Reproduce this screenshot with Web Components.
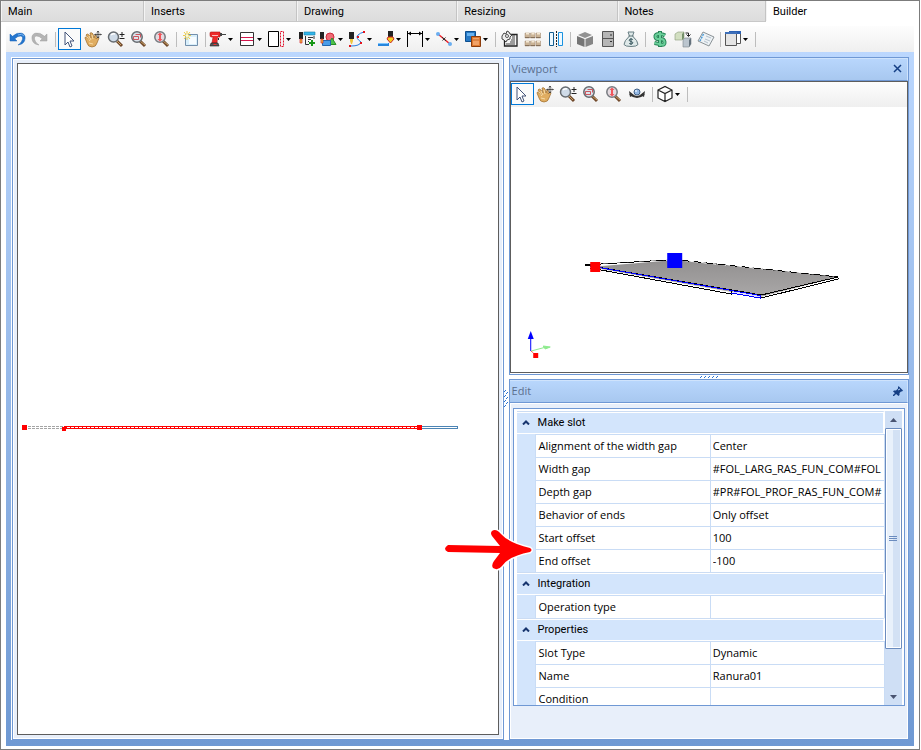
<!DOCTYPE html>
<html lang="en">
<head>
<meta charset="utf-8">
<title>Builder</title>
<style>
  body {
    margin: 0;
    background: #fff;
    color: #000;
    font: 11px/16px "Open Sans", "Noto Sans", sans-serif;
  }
</style>
</head>
<body>
<builder-app></builder-app>

<script>
const ICONS = {
  undo: `<path d="M0 3v7h7L4.800 7.800Q8 4.500 11 5Q14 6 11.500 10.500Q10.500 12.500 8 14Q13 13.500 14.500 10Q16.500 4 12 2.200Q7 1 2.500 5.300Z" fill="#2476cf" stroke="#1561b5" stroke-width=".5"/><path d="M8 4Q12 2 14 5" fill="none" stroke="#7db6ef"/>`,
  redo: `<path d="M14 3v7H7l2.200-2.200Q6 4.500 3 5Q0 6 2.500 10.500Q3.500 12.500 6 14Q1 13.500 -.5 10Q-2.500 4 2 2.200Q7 1 11.500 5.300Z" fill="#b4b4b4" stroke="#9d9d9d" stroke-width=".5"/>`,
  pointer: `<path d="M3 1v13l3-3 2 5 2-1-2-5h4Z" fill="#fff" stroke="#435378" stroke-width="1"/>`,
  hand: `<path d="M0 7Q0 5 2 7l2 2-3-5Q2 2 4 4l2 3-1-5Q7 1 8 3l1 4 1-3Q12 3 11 8q3-3 3-1l-2 5q-1 4-5 4-4 0-5-4Z" fill="#e0ad61" stroke="#9b6a2b" stroke-width=".7"/><path d="M2 6l3 4M4 5l2 4M7 4l1 4M4 12l4 1" stroke="#f7dca8" fill="none"/><path d="M13 0v7M9.500 3.500h7M12 1.500l1-1.500 1 1.500M12 5.500l1 1.500 1-1.500M11 2.500l-1 1 1 1M15 2.500l1 1-1 1" fill="none" stroke="#333" stroke-width=".8"/>`,
  zoomPlus: `<path d="M9 10l5 5" stroke="#70482a" stroke-width="3"/><path d="M9 10l4 4" stroke="#c8a468"/><circle cx="5.500" cy="6" r="5" fill="#cfdbe8" stroke="#666b70" stroke-width="1.500"/><path d="M3 4q2-2 4-1" fill="none" stroke="#fff" stroke-width="1.500"/><path d="M11.500 3.500h5M14 1v5M11.500 7.500h5" stroke="#222"/>`,
  zoomArea: `<path d="M9 10l5 5" stroke="#70482a" stroke-width="3"/><path d="M9 10l5 4" stroke="#c8a468"/><circle cx="6" cy="6" r="5.200" fill="#dce3eb" stroke="#666b70" stroke-width="1.500"/><path d="M2.500 5.500h5v3h-5zM4.500 3.500h5v3" fill="none" stroke="#c8333b" stroke-width=".8"/>`,
  zoomFit: `<path d="M9 10l5 5" stroke="#70482a" stroke-width="3"/><path d="M9 10l5 4" stroke="#c8a468"/><circle cx="6" cy="6" r="5.200" fill="#e4dbe1" stroke="#777b80" stroke-width="1.500"/><path d="M6 3v6" stroke="#f0565b" stroke-width="2"/><path d="M3.500 4L6 1.500 8.500 4ZM3.500 8L6 10.500 8.500 8Z" fill="#f0565b"/>`,
  fresh: `<path d="M2.500 3.500h12v11h-12z" fill="#d9effb" stroke="#7390ac"/><path d="M6 6h7v7H6z" fill="#f7fcff"/><path d="M4 0v9M0 4.500h8M1 1l6 7M7 1L1 8" stroke="#efcd46"/><circle cx="4" cy="4.500" r="1.500" fill="#fffbd0"/>`,
  drill: `<path d="M0 2q0-1 1-1h9v5H7.500L7 12H2l1-6H1Q0 6 0 4Z" fill="#ee2929" stroke="#a81515" stroke-width=".6"/><path d="M10 2h2v3h-2M12 3h4v1h-4" fill="#444"/><path d="M2 4.500h6" stroke="#fff" stroke-width=".7"/><path d="M1 12h7l1 3H0Z" fill="#555" stroke="#222" stroke-width=".6"/><path d="M3.500 13.500h3" stroke="#e33"/><path d="M8 7l1 1-1 1" stroke="#222" fill="none"/>`,
  shelves: `<path d="M1.500 1.500h13v13h-13z" fill="#fff" stroke="#333"/><path d="M2 6h12M2 9h12" stroke="#d5164c" shape-rendering="crispEdges"/>`,
  split: `<path d="M.5 .5h10v15H.5z" fill="#fff" stroke="#000"/><path d="M12.500 .5h3v15h-3z" fill="none" stroke="#e0122b" stroke-dasharray="2 1"/>`,
  cutAdd: `<path d="M0 1h4v7H0z" fill="#222"/><path d="M1 8h2v4H1z" fill="#eec53d" stroke="#d5252b" stroke-width=".7"/><path d="M5 1h11v3H5z" fill="#32b5ea" stroke="#167ca6" stroke-width=".6"/><path d="M6.500 5v8.500H10M15 5v3M9 6.500h5M9 8.500h3M9 10.500h1" fill="none" stroke="#333"/><path d="M13 9v6M10 12h6" stroke="#169616" stroke-width="2"/>`,
  shapes: `<circle cx="10" cy="6" r="4" fill="#ef6a75" stroke="#cf2b3b"/><path d="M8 13.500l4-6.500 4 6.500Z" fill="#4bc24b" stroke="#278d27"/><path d="M2.500 9.500h8v5h-8z" fill="#4a9de8" stroke="#2067b1"/><path d="M0 1h4v7H0z" fill="#222"/><path d="M1 8h2v4H1z" fill="#eec53d" stroke="#d5252b" stroke-width=".7"/>`,
  curve: `<path d="M2 15q9 0 10-4-6-4-3-7 2-2 6-3" fill="none" stroke="#247ee1"/><path d="M0 1h5v7H0z" fill="#222"/><path d="M1 8h3v2L3 13H2L1 10z" fill="#eec53d"/><path d="M0 14h2v2H0zM11 11h2v2h-2zM14 0h2v2h-2zM8 5h2v2H8z" fill="#e4131b"/>`,
  edge: `<path d="M0 12h11v3H0z" fill="#2685dd"/><path d="M0 12.500h10" stroke="#7cc5ff"/><path d="M10 0h5v6h-5z" fill="#222"/><path d="M10 6h5l1 2-3.500 4L9 8Z" fill="#f2cd20" stroke="#cd2420"/>`,
  dimension: `<path d="M.5 0v16M15.500 0v16M1 2.500h14" fill="none" stroke="#000"/><path d="M1 2.500l3-2v4ZM15 2.500l-3-2v4Z"/>`,
  line: `<path d="M2 3l12 10" stroke="#ef1f27" stroke-width="1.500"/><path d="M6 6l4 4M9.500 6.500l-3 3" stroke="#333"/><circle cx="2" cy="3" r="2" fill="#6aaef0"/><circle cx="14" cy="13" r="2" fill="#6aaef0"/>`,
  copy: `<path d="M.5 .5h10v10H.5z" fill="#2678c4" stroke="#0d4f8e"/><path d="M2 2h7v3H2z" fill="#68b2ef"/><path d="M6.500 5.500h9v10h-9z" fill="#df782c" stroke="#8b3c0c"/><path d="M8 7h6v7H8z" fill="#f1a267"/><path d="M8 9h6" stroke="#c56421"/>`,
  estimate: `<path d="M6 3.500h9v11.500H2.500V9" fill="#f4f4f4" stroke="#222" stroke-width="1.300"/><path d="M4 13h9M8 11h5M10 7h3M9 9h4M10 5h3" stroke="#444"/><path d="M0 5l2-3 2 1 1-3 2 1 1 2 2 1-2 2v2l-3 1-1 2-2-2-2-1Z" fill="#eee" stroke="#333" stroke-width=".9"/><circle cx="5" cy="5" r="1.500" fill="#fff" stroke="#555"/>`,
  people: `<g fill="#cbb496" stroke="#a18a70" stroke-width=".5"><path d="M0 2h4.500v5H0zM5.500 2H10v5H5.500zM11 2h4.500v5H11zM0 10h4.500v5H0zM5.500 10H10v5H5.500zM11 10h4.500v5H11z"/></g><path d="M1 2.500h3M6.500 2.500h3M12 2.500h3M1 10.500h3M6.500 10.500h3M12 10.500h3" stroke="#f3e8d5" stroke-width="2"/><path d="M0 6.500h4.500M5.500 6.500H10M11 6.500h4.500M0 14.500h4.500M5.500 14.500H10M11 14.500h4.500" stroke="#86705a"/>`,
  mirror: `<path d="M1.500 1.500h4v13h-4z" fill="#eef9ff" stroke="#155e91"/><path d="M10.500 1.500h4v13h-4z" fill="#eef9ff" stroke="#1992e0"/><path d="M8 0v16" fill="none" stroke="#222" stroke-dasharray="2 1" shape-rendering="crispEdges"/>`,
  box: `<path d="M1 4l7-3 7 3-7 3Z" fill="#929292"/><path d="M0 5l7.500 3v8L0 13Z" fill="#757575"/><path d="M16 5L8.500 8v8l7.500-3Z" fill="#858585"/>`,
  cabinet: `<path d="M2.500 .5h11v15h-11z" fill="#b6b6b6" stroke="#555"/><path d="M3 7.500h10" stroke="#555"/><path d="M10 4h2M10 10.500h2" stroke="#333"/>`,
  money: `<path d="M5 1h6L9.500 5q5.500 5 5.500 8.500-1 2-7 2t-7-2Q1 10 6.500 5Z" fill="#dfe9e9" stroke="#687e83"/><path d="M5.500 5h5" stroke="#60767a"/><path d="M9.800 8.500Q8 7.500 6.500 8.500t1.500 2 1.500 2q-1 1-3.300 0M8 7v7" stroke="#38565e" fill="none"/>`,
  dollar: `<path d="M13 4.500Q10 2.500 6.500 3T3.500 6t4.500 2 4.500 3-3.500 2.500-6.500-1.500M8 0v16" fill="none" stroke="#278557" stroke-width="4"/><path d="M13 4.500Q10 2.500 6.500 3T3.500 6t4.500 2 4.500 3-3.500 2.500-6.500-1.500M8 1v14" fill="none" stroke="#6acf9a" stroke-width="2"/>`,
  blocks: `<path d="M0 3l3-2h6v6l-2 2H0Z" fill="#d2dfc1" stroke="#8a9b78" stroke-width=".6"/><path d="M7 3l2-2v6L7 9Z" fill="#74906a"/><path d="M8 9l2-2h6v6l-2 3H8Z" fill="#bbc5ce" stroke="#78838c" stroke-width=".6"/><path d="M14 9l2-2v6l-2 3Z" fill="#64717c"/><path d="M10.500 2h3v3M11.500 3.500l2 2 2-2" stroke="#222" fill="none"/>`,
  notes: `<path d="M5 1l11 5-5 9-11-5Z" fill="#edf2f5" stroke="#8a9296"/><path d="M5.500 3L2 10" stroke="#4a9cd9" stroke-dasharray="2 1" stroke-width="1.500"/><path d="M8 5l5 2M7 8l5 2M6 10l4 2" stroke="#b4c1cc"/>`,
  windows: `<path d="M4.500 1.500h11v11h-11z" fill="#fff" stroke="#555"/><path d="M4 0h12v3H4z" fill="#2c62b5"/><path d="M.5 2.500h11v12H.5z" fill="#e4e4e4" stroke="#555"/><path d="M0 1h12v2H0z" fill="#3f70b9"/>`,
  orbit: `<circle cx="8" cy="6" r="3" fill="#94b8e4" stroke="#426287"/><path d="M1 8q7 6 14 0" fill="none" stroke="#333" stroke-width="2"/><path d="M0 5l1 6 4-2ZM16 5l-1 6-4-2Z" fill="#333"/><circle cx="7" cy="5" r="1" fill="#e1efff"/>`,
  cube: `<path d="M1 4l7-3.500L15 4v8l-7 3.500L1 12ZM1 4l7 3.500L15 4M8 7.500v8" fill="#fff" stroke="#222" stroke-width="1.200"/>`,
};

class BuilderApp extends HTMLElement {
  connectedCallback() {
    const root = this.attachShadow({ mode: 'open' });
    root.innerHTML = `
      <style>
        :host {
          display: flex;
          flex-direction: column;
          position: relative;
          box-sizing: border-box;
          min-height: 100vh;
          margin-right: 1px;
          border: 1px solid #7c7c7c;
          background: #fff;
        }
        tool-bar { margin: 4px 5px 0; }
        main {
          flex: 1;
          display: grid;
          grid-template-columns: minmax(0, 492fr) 5px minmax(0, 400fr);
          box-sizing: border-box;
          margin: 0 5px 3px;
          padding: 5px 5px 6px;
          background: linear-gradient(#bbd7fe, #6f99d3);
        }
        .left {
          padding: 1px 0 0 1px;
          background: #fff;
          display: flex;
        }
        .left plan-view { flex: 1; }
        .right {
          display: grid;
          grid-template-rows: minmax(0, 318fr) 4px minmax(0, 361fr);
        }
        .grip {
          display: flex;
          align-items: center;
          justify-content: center;
          background: #fff;
        }
        .callout {
          position: absolute;
          left: 48%;
          top: 527px;
          width: 90px;
          height: 42px;
          overflow: visible;
        }
      </style>
      <tab-strip></tab-strip>
      <tool-bar label="Builder tools" items="undo redo | pointer* hand zoomPlus zoomArea zoomFit | fresh | drill+ shelves+ split+ cutAdd shapes+ curve+ edge+ dimension+ line+ copy+ | estimate people mirror | box cabinet money | dollar blocks notes | windows+ |"></tool-bar>
      <main>
        <div class="left"><plan-view></plan-view></div>
        <div class="grip">
          <svg width="4" height="20" viewBox="0 0 4 20"><path d="M0 3l2-2M2 5l2-2M0 8l2-2M2 10l2-2M0 13l2-2M2 15l2-2M0 18l2-2" stroke="#2a72d0"/></svg>
        </div>
        <div class="right">
          <dock-panel heading="Viewport" action="close">
            <model-view></model-view>
          </dock-panel>
          <div class="grip">
            <svg width="20" height="2" viewBox="0 0 20 2"><path d="M1 2l2-2M5 2l2-2M9 2l2-2M13 2l2-2M17 2l2-2" stroke="#2a72d0"/></svg>
          </div>
          <dock-panel heading="Edit" action="pin" padded>
            <property-grid>
              <property-group heading="Make slot">
                <property-row name="Alignment of the width gap" value="Center"></property-row>
                <property-row name="Width gap" value="#FOL_LARG_RAS_FUN_COM#FOL"></property-row>
                <property-row name="Depth gap" value="#PR#FOL_PROF_RAS_FUN_COM#"></property-row>
                <property-row name="Behavior of ends" value="Only offset"></property-row>
                <property-row name="Start offset" value="100"></property-row>
                <property-row name="End offset" value="-100"></property-row>
              </property-group>
              <property-group heading="Integration">
                <property-row name="Operation type" value=""></property-row>
              </property-group>
              <property-group heading="Properties">
                <property-row name="Slot Type" value="Dynamic"></property-row>
                <property-row name="Name" value="Ranura01"></property-row>
                <property-row name="Condition" value=""></property-row>
              </property-group>
            </property-grid>
          </dock-panel>
        </div>
      </main>
      <svg class="callout" viewBox="0 0 90 42">
        <path d="M50 3Q54 0 59 6 67 15 88 20 91 22 88 24 67 28 60 38 56 43 51 40 49 37 52 33L58 25 6 24Q0 21 6 17L58 18 50 8Q48 5 50 3Z" fill="#f00" stroke="#fff" stroke-width="3" paint-order="stroke"/>
      </svg>`;
  }
}

class TabStrip extends HTMLElement {
  connectedCallback() {
    const tabs = [['Main', 142], ['Inserts', 153], ['Drawing', 161], ['Resizing', 161], ['Notes', 148], ['Builder', 153]];
    const root = this.attachShadow({ mode: 'open' });
    root.innerHTML = `
      <style>
        :host { display: flex; height: 21px; }
        button {
          flex: 1 1 0;
          min-width: 0;
          box-sizing: border-box;
          padding: 2px 7px 0;
          border: 0;
          border-right: 1px solid #c4c4c4;
          border-bottom: 1px solid #c8c8c8;
          background: linear-gradient(#e6e6e6, #dcdcdc);
          box-shadow: inset 1px 0 #f4f4f4;
          color: #000;
          font: 11px/18px Roboto, sans-serif;
          text-align: left;
        }
        button[aria-selected=true] {
          background: #fff;
          border-color: #fff;
        }
      </style>
      <div role="tablist" style="display: contents">
        ${tabs.map(([name, grow]) => `<button role="tab" style="flex-grow: ${grow}" aria-selected="${name === 'Builder'}">${name}</button>`).join('')}
      </div>`;
  }
}

class ToolBar extends HTMLElement {
  connectedCallback() {
    const root = this.attachShadow({ mode: 'open' });
    // "|" is a separator, "*" marks the active tool, "+" adds a drop-down arrow
    const items = this.getAttribute('items').split(' ').map((item) => {
      if (item === '|') {
        return '<i></i>';
      }
      const name = item.replace(/[*+]/, '');
      const drop = item.endsWith('+');
      return `
        <button class="${drop ? 'drop' : ''}" aria-label="${name}" aria-pressed="${item.endsWith('*')}">
          <svg width="16" height="16" viewBox="0 0 16 16">${ICONS[name]}</svg>
          ${drop ? '<svg width="5" height="3" viewBox="0 0 5 3"><path d="M0 0h5L2.500 3Z"/></svg>' : ''}
        </button>`;
    });
    root.innerHTML = `
      <style>
        :host {
          display: flex;
          align-items: flex-start;
          box-sizing: border-box;
          height: 26px;
          padding-top: 2px;
          overflow: hidden;
          background: linear-gradient(#fdfdfd, #efefef);
        }
        button {
          flex: none;
          display: flex;
          align-items: center;
          justify-content: center;
          gap: 2px;
          box-sizing: border-box;
          width: 23px;
          height: 22px;
          padding: 0;
          border: 1px solid transparent;
          background: none;
        }
        button.drop {
          width: 29px;
          padding-right: 2px;
        }
        button[aria-pressed=true] {
          border-color: #0078d7;
          background: #fafafa;
        }
        svg { flex: none; overflow: visible; }
        i {
          flex: none;
          width: 1px;
          height: 15px;
          margin: 4px 2px 0 3px;
          background: #bdbdbd;
        }
      </style>
      ${items.join('')}`;
    this.setAttribute('role', 'toolbar');
    this.setAttribute('aria-label', this.getAttribute('label'));
  }
}

class PlanView extends HTMLElement {
  connectedCallback() {
    const root = this.attachShadow({ mode: 'open' });
    root.innerHTML = `
      <style>
        :host {
          display: flex;
          box-sizing: border-box;
          padding: 3px;
          border: 1px solid #6f98d4;
          background: #e8effa;
          box-shadow: inset 0 0 0 1px #fff;
        }
        div {
          flex: 1;
          display: flex;
          border: 1px solid #5d5d5d;
          margin: 1px;
          background: #fff;
        }
        svg { flex: 1; width: 0; contain: size; }
      </style>
      <div>
        <svg viewBox="0 0 480 671" shape-rendering="crispEdges">
          <path d="M10 363.500h36M10 365.500h36" stroke="#a5a5a5" stroke-dasharray="3 1"/>
          <path d="M402 363.500h38.500v2H402" fill="none" stroke="#4c84b4"/>
          <path d="M46 363.500h356M46 365.500h356" stroke="#f00"/>
          <path d="M48 364.500h352" stroke="#f00" stroke-dasharray="1 3"/>
          <path d="M4 362h5v5H4zM44 364h4v4h-4zM399 362h5v5h-5z" fill="#f00"/>
        </svg>
      </div>`;
  }
}

class DockPanel extends HTMLElement {
  connectedCallback() {
    const heading = this.getAttribute('heading');
    const close = this.getAttribute('action') === 'close';
    const glyph = close
      ? '<path d="M1 1l7 7M8 1L1 8" stroke="#153f85" stroke-width="1.500" fill="none"/>'
      : '<path d="M5.500 0L10 4.500 9 5.500H8L6.500 7v2l-1 1L0 5.500l1-1h2L5 2.500v-1Z" fill="#153f85"/><path d="M3 7L0 10" stroke="#153f85" stroke-width="1.500"/><path d="M5 4l2-1" stroke="#b7d3f7"/>';
    const root = this.attachShadow({ mode: 'open' });
    root.innerHTML = `
      <style>
        :host {
          display: flex;
          flex-direction: column;
          min-height: 0;
          box-sizing: border-box;
          border: 1px solid #6f98d4;
          background: #e8effa;
        }
        header {
          flex: none;
          display: flex;
          align-items: center;
          justify-content: space-between;
          box-sizing: border-box;
          height: 23px;
          padding: 0 4px 1px 2px;
          border: 1px solid #cfe3fc;
          border-width: 1px 1px 0 0;
          border-bottom: 1px solid #6f98d4;
          background: linear-gradient(#b8d6fc, #a8c8f0);
          color: #5b6f8f;
        }
        h2 { margin: 0; font: inherit; }
        button {
          display: flex;
          padding: 0;
          border: 0;
          background: none;
        }
        section {
          flex: 1;
          min-height: 0;
          display: flex;
          flex-direction: column;
          box-shadow: inset 0 0 0 1px #fff;
          padding-bottom: 1px;
        }
        :host([padded]) section { padding: 5px 3px 33px; }
      </style>
      <header>
        <h2>${heading}</h2>
        <button aria-label="${close ? 'Close' : 'Pin'}"><svg width="10" height="10" viewBox="0 0 10 10">${glyph}</svg></button>
      </header>
      <section><slot></slot></section>`;
  }
}

class ModelView extends HTMLElement {
  connectedCallback() {
    const root = this.attachShadow({ mode: 'open' });
    root.innerHTML = `
      <style>
        :host {
          flex: 1;
          min-height: 0;
          display: flex;
          flex-direction: column;
          border: 1px solid #5d5d5d;
          background: #fff;
        }
        tool-bar { flex: none; height: 25px; padding-top: 1px; }
        .scene { flex: 1; min-height: 0; width: 100%; contain: size; }
      </style>
      <tool-bar label="Viewport tools" items="pointer* hand zoomPlus zoomArea zoomFit orbit | cube+ |"></tool-bar>
      <svg class="scene" viewBox="0 0 396 265">
        <defs>
          <linearGradient id="board" x2="0" y2="1">
            <stop stop-color="#929090"/>
            <stop offset="1" stop-color="#aaa8a8"/>
          </linearGradient>
        </defs>
        <path d="M79 160L163 153 327 170 249 190Z" fill="url(#board)"/>
        <g fill="none" stroke="#000" shape-rendering="crispEdges">
          <path d="M74 158L163 152.500 327 170 250 188 74 158"/>
          <path d="M79 161L220 187M327 171v1L250 191"/>
          <path d="M220 184v4"/>
        </g>
        <path d="M92 156L163 152M166 153L323 169" stroke="#fff" stroke-dasharray="5 7"/>
        <path d="M222 185L249 190" stroke="#dedeff" stroke-width="2"/>
        <path d="M79 159L249 188.500v2.500l-29-5" fill="none" stroke="#00f" shape-rendering="crispEdges"/>
        <path d="M79 155h10v10H79z" fill="#f00"/>
        <path d="M156 146h15v15h-15z" fill="#00f"/>
        <path d="M19.500 231v13" stroke="#00f"/>
        <path d="M19.500 224l3 8h-6z" fill="#00f"/>
        <path d="M20 244l15-4" stroke="#8eeb8e"/>
        <path d="M32 239l7 1-5 2z" fill="#8eeb8e" stroke="#8eeb8e"/>
        <path d="M20 244l4 4" stroke="#f00" stroke-dasharray="1 1"/>
        <path d="M22 246h5v5h-5z" fill="#f00"/>
      </svg>`;
  }
}

class PropertyGrid extends HTMLElement {
  connectedCallback() {
    const root = this.attachShadow({ mode: 'open' });
    root.innerHTML = `
      <style>
        :host {
          flex: 1;
          min-height: 0;
          display: flex;
          border: 1px solid #6f98d4;
          padding: 2px 2px 0 3px;
          background: #fff;
        }
        .rows {
          flex: 1;
          min-width: 0;
          overflow: hidden;
          contain: size;
        }
        .bar {
          flex: none;
          display: flex;
          flex-direction: column;
          width: 17px;
          background: #cfdff5;
        }
        .bar button {
          flex: none;
          display: flex;
          align-items: center;
          justify-content: center;
          height: 17px;
          padding: 0;
          border: 0;
          background: none;
        }
        .track { flex: 1; }
        .thumb {
          display: flex;
          align-items: center;
          justify-content: center;
          box-sizing: border-box;
          height: 85%;
          border: 1px solid #6b8cbf;
          border-radius: 1px;
          background: linear-gradient(90deg, #e9f1fb 45%, #d3e1f4 45%);
          box-shadow: inset 0 0 0 1px #fff;
        }
      </style>
      <div class="rows"><slot></slot></div>
      <div class="bar">
        <button aria-label="Scroll up"><svg width="7" height="4" viewBox="0 0 7 4"><path d="M0 4L3.500 0 7 4Z" fill="#495471"/></svg></button>
        <div class="track">
          <div class="thumb"><svg width="8" height="5" viewBox="0 0 8 5"><path d="M0 .5h8M0 2.500h8M0 4.500h8" stroke="#6b8cbf"/></svg></div>
        </div>
        <button aria-label="Scroll down"><svg width="7" height="4" viewBox="0 0 7 4"><path d="M0 0h7L3.500 4Z" fill="#495471"/></svg></button>
      </div>`;
  }
}

class PropertyGroup extends HTMLElement {
  connectedCallback() {
    const root = this.attachShadow({ mode: 'open' });
    root.innerHTML = `
      <style>
        :host { display: block; }
        button {
          display: flex;
          align-items: center;
          gap: 8px;
          box-sizing: border-box;
          width: 100%;
          height: 23px;
          padding: 0 0 0 5px;
          border: 0;
          border-top: 1px solid #cbdcf3;
          border-right: 2px solid #fff;
          border-bottom: 1px solid #fff;
          background: #d3e5fc;
          box-shadow: inset 0 1px #fff;
          color: #000;
          font: 11px/16px Roboto, sans-serif;
          text-align: left;
        }
      </style>
      <button aria-expanded="true">
        <svg width="8" height="5" viewBox="0 0 8 5"><path d="M1 4.500l3-3 3 3" fill="none" stroke="#17356f" stroke-width="2"/></svg>
        ${this.getAttribute('heading')}
      </button>
      <slot></slot>`;

    const button = root.querySelector('button');
    const slot = root.querySelector('slot');
    button.addEventListener('click', () => {
      slot.hidden = !slot.hidden;
      slot.style.display = slot.hidden ? 'none' : '';
      button.setAttribute('aria-expanded', String(!slot.hidden));
    });
  }
}

class PropertyRow extends HTMLElement {
  connectedCallback() {
    const root = this.attachShadow({ mode: 'open' });
    root.innerHTML = `
      <style>
        :host {
          display: grid;
          grid-template-columns: minmax(0, 175fr) minmax(0, 175fr);
          box-sizing: border-box;
          height: 23px;
          padding-left: 18px;
          background: #d3e5fc;
        }
        label, input {
          box-sizing: border-box;
          min-width: 0;
          height: 23px;
          border: 0 solid #c9dcf5;
          border-width: 1px 0 0 1px;
          background: #fff;
          color: #000;
          font: 11px/22px "Open Sans", "Noto Sans", sans-serif;
        }
        label {
          padding-left: 3px;
          white-space: nowrap;
          overflow: hidden;
        }
        input {
          padding: 0 0 2px 2px;
          border-right-width: 1px;
          border-radius: 0;
          outline: none;
        }
      </style>
      <label for="value">${this.getAttribute('name')}</label>
      <input id="value" value="${this.getAttribute('value')}">`;
  }
}

customElements.define('builder-app', BuilderApp);
customElements.define('tab-strip', TabStrip);
customElements.define('tool-bar', ToolBar);
customElements.define('plan-view', PlanView);
customElements.define('dock-panel', DockPanel);
customElements.define('model-view', ModelView);
customElements.define('property-grid', PropertyGrid);
customElements.define('property-group', PropertyGroup);
customElements.define('property-row', PropertyRow);
</script>
</body>
</html>
